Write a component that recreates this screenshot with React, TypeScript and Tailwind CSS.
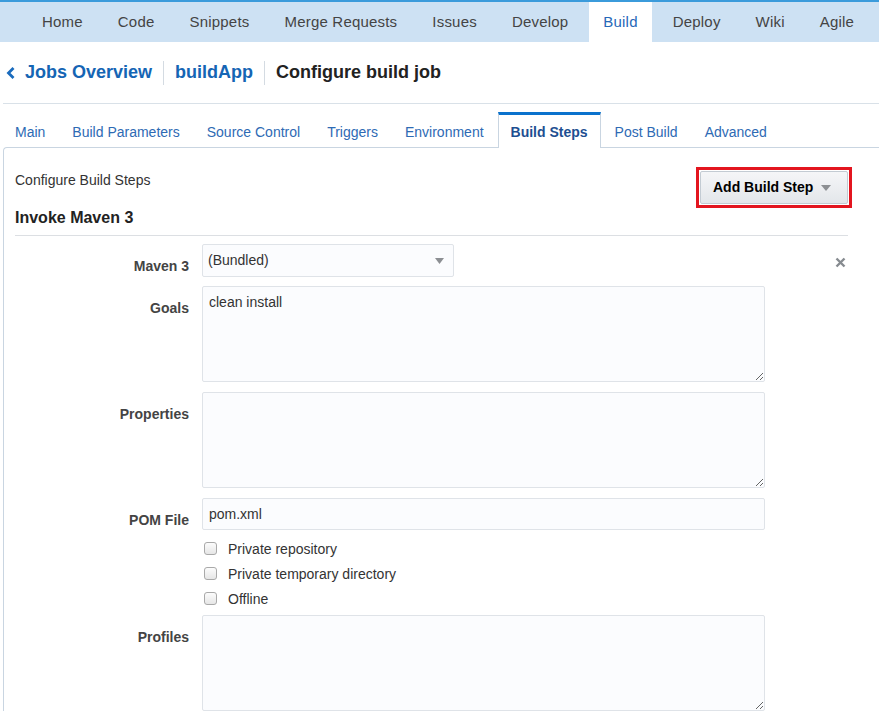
import React from "react";

const navItems = ["Home", "Code", "Snippets", "Merge Requests", "Issues", "Develop", "Build", "Deploy", "Wiki", "Agile"];
const tabs = ["Main", "Build Parameters", "Source Control", "Triggers", "Environment", "Build Steps", "Post Build", "Advanced"];

function Label({ children }: { children: React.ReactNode }) {
  return (
    <div className="w-[174px] shrink-0 text-right pt-[12px] pr-0 text-[14px] leading-[20px] font-bold text-[#444]">
      {children}
    </div>
  );
}

function Check({ label }: { label: string }) {
  return (
    <div className="flex items-center h-[25px]">
      <span className="ml-[2px] w-[13px] h-[13px] rounded-[3px] border border-[#a9a9a9] bg-gradient-to-b from-[#fcfcfc] to-[#e6e6e6]" />
      <span className="ml-[11px] text-[14px] leading-[20px] text-[#333]">{label}</span>
    </div>
  );
}

function Area({ value = "" }: { value?: string }) {
  return (
    <textarea
      defaultValue={value}
      className="block w-[563px] h-[96px] rounded-[2px] border border-[#dfe3e8] bg-[#fbfcfe] px-[6px] pt-[7px] pb-[5px] text-[14px] leading-[17px] text-[#333] outline-none"
    />
  );
}

export default function App() {
  return (
    <div className="w-[879px] h-[718px] overflow-hidden bg-white font-['Liberation_Sans',Arial,sans-serif]">
      {/* Top nav */}
      <div className="h-[42px] bg-[#cde1f3] border-t-2 border-[#3b9bdb] flex items-stretch">
        <div className="ml-[28px] flex items-stretch gap-[7px]">
          {navItems.map((n) => (
            <div
              key={n}
              className={
                "px-[14px] flex items-center text-[15px] tracking-[0.2px] " +
                (n === "Build" ? "bg-white text-[#2668b8]" : "text-[#444]")
              }
            >
              {n}
            </div>
          ))}
        </div>
      </div>

      <div className="ml-[3px]">
        {/* Breadcrumb */}
        <div className="h-[62px] border-b border-[#d9e1e8] flex items-center">
          <div className="flex items-center">
            <svg width="10" height="14" viewBox="0 0 10 14" className="ml-[3px] mr-[9px]">
              <path d="M7.5 2 L2.5 7 L7.5 12" fill="none" stroke="#1a6bbd" strokeWidth="2.8" />
            </svg>
            <span className="text-[18px] font-bold text-[#1565b4]">Jobs Overview</span>
            <span className="mx-[11px] w-px h-[24px] bg-[#d4dbe2]" />
            <span className="text-[18px] font-bold text-[#1565b4]">buildApp</span>
            <span className="mx-[11px] w-px h-[24px] bg-[#d4dbe2]" />
            <span className="text-[18px] font-bold text-[#222]">Configure build job</span>
          </div>
        </div>

        {/* Tabs */}
        <div className="mt-[8px] -ml-px flex items-end gap-px relative z-10">
          {tabs.map((t) => {
            const active = t === "Build Steps";
            return (
              <div
                key={t}
                className={
                  "h-[36px] px-[12px] pt-[2px] flex items-center text-[14px] border-x border-t-[3px] -mb-px " +
                  (active
                    ? "bg-white border-x-[#c9d5e1] border-t-[#0a72cd] font-bold text-[#1e4f91]"
                    : "border-transparent text-[#2e6ab4]")
                }
              >
                {t}
              </div>
            );
          })}
        </div>

        {/* Panel */}
        <div className="border-l border-t border-[#c9d5e1] rounded-tl-[4px] pl-[11px] pt-[19px] w-[900px]">
          <div className="w-[833px]">
            <div className="flex items-start justify-between">
              <div className="mt-[3px] text-[14px] leading-[20px] text-[#333]">Configure Build Steps</div>
              <div className="-mr-[4px] border-[3px] border-[#e3151f] p-px">
                <div className="h-[33px] w-[148px] rounded-[2px] border border-[#c3cbd3] bg-gradient-to-b from-[#f5f6f8] to-[#e3e6ea] flex items-center pl-[12px]">
                  <span className="text-[14px] font-bold text-black">Add Build Step</span>
                  <svg width="10" height="6" viewBox="0 0 10 6" className="ml-[8px] mt-px">
                    <path d="M0 0 H10 L5 6 Z" fill="#8c8f93" />
                  </svg>
                </div>
              </div>
            </div>
            <div className="text-[16px] leading-[20px] font-bold text-[#222] pb-[7px] border-b border-[#dcdfe3]">
              Invoke Maven 3
            </div>

            <div className="mt-[8px] flex flex-col">
              <div className="flex gap-[13px] items-start relative">
                <Label>Maven 3</Label>
                <div className="w-[252px] h-[33px] rounded-[2px] border border-[#dfe3e8] bg-[#fbfcfe] flex items-center justify-between pl-[5px] pr-[9px]">
                  <span className="text-[14px] text-[#333]">(Bundled)</span>
                  <svg width="9" height="6" viewBox="0 0 9 6">
                    <path d="M0 0 H9 L4.5 6 Z" fill="#8c8f93" />
                  </svg>
                </div>
                <svg width="11" height="11" viewBox="0 0 11 11" className="absolute right-[2px] top-[13px]">
                  <path d="M1.5 1.5 L9.5 9.5 M9.5 1.5 L1.5 9.5" stroke="#868b90" strokeWidth="2.4" />
                </svg>
              </div>

              <div className="mt-[9px] flex gap-[13px] items-start">
                <Label>Goals</Label>
                <Area value="clean install" />
              </div>

              <div className="mt-[10px] flex gap-[13px] items-start">
                <Label>Properties</Label>
                <Area />
              </div>

              <div className="mt-[10px] flex gap-[13px] items-start">
                <Label>POM File</Label>
                <div className="w-[563px] h-[32px] rounded-[2px] border border-[#dfe3e8] bg-[#fbfcfe] flex items-center pl-[6px]">
                  <span className="text-[14px] text-[#333]">pom.xml</span>
                </div>
              </div>

              <div className="mt-[6px] ml-[187px] flex flex-col">
                <Check label="Private repository" />
                <Check label="Private temporary directory" />
                <Check label="Offline" />
              </div>

              <div className="mt-[4px] flex gap-[13px] items-start">
                <Label>Profiles</Label>
                <Area />
              </div>
            </div>
          </div>
        </div>
      </div>
    </div>
  );
}
